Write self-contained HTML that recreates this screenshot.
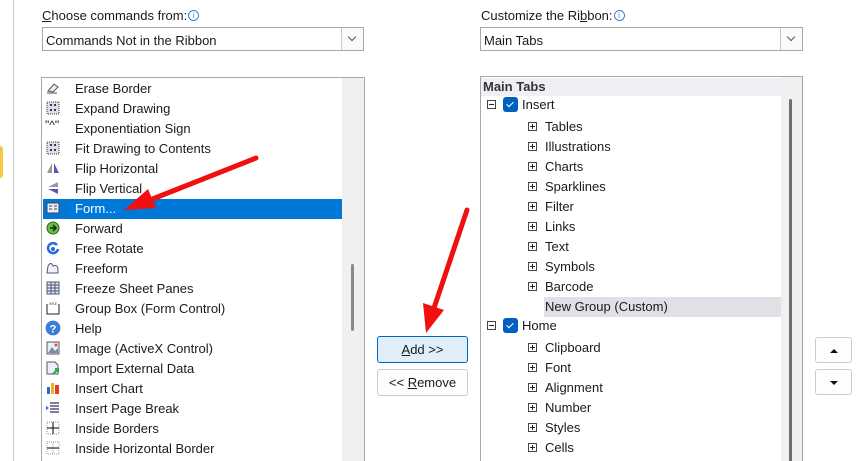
<!DOCTYPE html>
<html style="width:856px;height:461px;overflow:hidden"><head><meta charset="utf-8"><style>
*{box-sizing:border-box;margin:0;padding:0}
body{width:856px;height:461px;overflow:hidden;background:#fff;position:relative;font-family:"Liberation Sans",sans-serif;font-size:13px;color:#1a1a1a}
.a{position:absolute}
.lbl{top:8px;font-size:13px}
.info{display:inline-block;width:11px;height:11px;border:1px solid #3c7fd0;border-radius:50%;color:#3c7fd0;font-size:8px;line-height:9px;text-align:center;vertical-align:2px;margin-left:1px}
.dd{height:24px;border:1px solid #a8a8a8;background:#fff;padding:5px 0 0 3px}
.dd .btn{position:absolute;right:0;top:0;width:22px;height:22px;border-left:1px solid #c8c8c8;background:#fafafa}
.dd .btn:after{content:"";position:absolute;left:7px;top:6px;width:5px;height:5px;border-right:1px solid #555;border-bottom:1px solid #555;transform:rotate(45deg)}
.list{border:1px solid #a8a8a8;border-bottom:none;background:#fff;overflow:hidden}
.row{position:absolute;height:20px;line-height:22px;white-space:nowrap}
.ic{position:absolute;left:4px;top:3px;width:14px;height:14px}
.pm{position:absolute;width:9px;height:9px;border:1px solid #444;background:#fff}
.pm:before{content:"";position:absolute;left:1px;top:3px;width:5px;height:1px;background:#222}
.pm.p:after{content:"";position:absolute;left:3px;top:1px;width:1px;height:5px;background:#222}
.cb{position:absolute;width:15px;height:15px;background:#0060c0;border-radius:3px}
.cb:after{content:"";position:absolute;left:5px;top:3px;width:3px;height:6px;border-right:1.5px solid #fff;border-bottom:1.5px solid #fff;transform:rotate(45deg)}
.b{border:1px solid #ccc;border-radius:3px;background:#fdfdfd;text-align:center;line-height:26px}
</style></head><body>
<div class="a" style="left:13px;top:0;width:1px;height:461px;background:#c8c8c8"></div>
<div class="a" style="left:0;top:146px;width:3px;height:32px;background:#f5c842;border-radius:0 3px 3px 0"></div>

<div class="a lbl" style="left:42px"><u>C</u>hoose commands from:<span class="info">i</span></div>
<div class="a dd" style="left:42px;top:27px;width:322px">Commands Not in the Ribbon<div class="btn"></div></div>

<div class="a lbl" style="left:481px">Customize the Ri<u>b</u>bon:<span class="info">i</span></div>
<div class="a dd" style="left:480px;top:27px;width:323px">Main Tabs<div class="btn"></div></div>

<!-- left list -->
<div class="a list" style="left:41px;top:77px;width:324px;height:384px">
 <div class="a" style="left:300px;top:0;width:22px;height:384px;background:#f0f0f0"></div>
 <div class="a" style="left:309px;top:186px;width:3px;height:67px;background:#8a8a8a;border-radius:2px"></div>
 <div class="a" style="left:1px;top:121px;width:299px;height:20px;background:#0078d7"></div>
</div>
<div class="a" style="left:42px;top:78px;width:300px;height:383px;overflow:hidden">
 <div class="row" style="top:0"><svg class="ic" viewBox="0 0 14 14"><path d="M2 10 L8 3 L12 6 L7 11 Z" fill="#eee" stroke="#555"/><path d="M1 12 H11" stroke="#555"/></svg><span style="position:absolute;left:33px">Erase Border</span></div>
 <div class="row" style="top:20px"><svg class="ic" viewBox="0 0 14 14"><rect x="1" y="1" width="12" height="12" fill="#dde" stroke="#333" stroke-dasharray="1 1"/><path d="M4 4h2M8 4h2M4 9h2M8 9h2M5 3v2M9 3v2M5 8v2M9 8v2" stroke="#000"/></svg><span style="position:absolute;left:33px">Expand Drawing</span></div>
 <div class="row" style="top:40px"><span style="position:absolute;left:3px;font-size:12px;top:-4px">"^"</span><span style="position:absolute;left:33px">Exponentiation Sign</span></div>
 <div class="row" style="top:60px"><svg class="ic" viewBox="0 0 14 14"><rect x="1" y="1" width="12" height="12" fill="#dde" stroke="#333" stroke-dasharray="1 1"/><path d="M4 4h2M8 4h2M4 9h2M8 9h2M5 3v2M9 3v2M5 8v2M9 8v2" stroke="#000"/></svg><span style="position:absolute;left:33px">Fit Drawing to Contents</span></div>
 <div class="row" style="top:80px"><svg class="ic" viewBox="0 0 14 14"><path d="M6 2 L1 12 H6Z" fill="#999"/><path d="M8 2 L13 12 H8Z" fill="#6a4fb0"/></svg><span style="position:absolute;left:33px">Flip Horizontal</span></div>
 <div class="row" style="top:100px"><svg class="ic" viewBox="0 0 14 14"><path d="M12 1 L2 6 H12Z" fill="#999"/><path d="M12 13 L2 8 H12Z" fill="#6a4fb0"/></svg><span style="position:absolute;left:33px">Flip Vertical</span></div>
 <div class="row" style="top:120px;color:#fff"><svg class="ic" viewBox="0 0 14 14"><rect x="1" y="2" width="12" height="10" fill="#e8eef8" stroke="#445"/><path d="M3 5h3M3 8h3M8 5h3M8 8h3" stroke="#445"/></svg><span style="position:absolute;left:33px">Form...</span></div>
 <div class="row" style="top:140px"><svg class="ic" viewBox="0 0 14 14"><circle cx="7" cy="7" r="6" fill="#6bbf3a" stroke="#2d6a18"/><path d="M4 7h5M7 4l3 3-3 3" stroke="#123" fill="none" stroke-width="1.5"/></svg><span style="position:absolute;left:33px">Forward</span></div>
 <div class="row" style="top:160px"><svg class="ic" viewBox="0 0 14 14"><path d="M11 4 A5 5 0 1 0 12 8" stroke="#2a6ad0" stroke-width="2.5" fill="none"/><circle cx="7" cy="8" r="2" fill="#2a6ad0"/></svg><span style="position:absolute;left:33px">Free Rotate</span></div>
 <div class="row" style="top:180px"><svg class="ic" viewBox="0 0 14 14"><path d="M1 12 L2 5 Q5 0 7 5 Q12 3 12 9 V12Z" fill="#eef3fa" stroke="#557"/></svg><span style="position:absolute;left:33px">Freeform</span></div>
 <div class="row" style="top:200px"><svg class="ic" viewBox="0 0 14 14"><rect x="1" y="1" width="12" height="12" fill="#dde6f4" stroke="#557"/><path d="M1 4h12M1 7h12M1 10h12M5 1v12M9 1v12" stroke="#557"/></svg><span style="position:absolute;left:33px">Freeze Sheet Panes</span></div>
 <div class="row" style="top:220px"><svg class="ic" viewBox="0 0 14 14"><path d="M1 3v10h12V3" stroke="#222" fill="none"/><text x="3" y="4" font-size="4" font-family="Liberation Sans">XYZ</text></svg><span style="position:absolute;left:33px">Group Box (Form Control)</span></div>
 <div class="row" style="top:240px"><svg class="ic" viewBox="0 0 14 14" style="width:16px;height:16px;top:2px;left:3px"><circle cx="7" cy="7" r="6.5" fill="#3b7dd8"/><text x="7" y="11" font-size="10" font-weight="bold" fill="#fff" text-anchor="middle" font-family="Liberation Sans">?</text></svg><span style="position:absolute;left:33px">Help</span></div>
 <div class="row" style="top:260px"><svg class="ic" viewBox="0 0 14 14"><rect x="1" y="1" width="12" height="12" fill="#e8eef6" stroke="#556"/><path d="M2 12 L6 6 L9 10 L12 7 V12Z" fill="#7b8aa0"/><circle cx="10" cy="4" r="1.5" fill="#e05030"/></svg><span style="position:absolute;left:33px">Image (ActiveX Control)</span></div>
 <div class="row" style="top:280px"><svg class="ic" viewBox="0 0 14 14"><path d="M1 1h8l3 3v9H1Z" fill="#eef" stroke="#556"/><path d="M7 13 L12 8 M9 8h3v3" stroke="#3a3" stroke-width="2" fill="none"/></svg><span style="position:absolute;left:33px">Import External Data</span></div>
 <div class="row" style="top:300px"><svg class="ic" viewBox="0 0 14 14"><rect x="1" y="6" width="3" height="7" fill="#2a6ad0"/><rect x="5" y="2" width="3" height="11" fill="#f0b020"/><rect x="9" y="4" width="4" height="9" fill="#e04020"/></svg><span style="position:absolute;left:33px">Insert Chart</span></div>
 <div class="row" style="top:320px"><svg class="ic" viewBox="0 0 14 14"><path d="M4 2h9M4 5h9M4 8h9M4 11h9" stroke="#557" stroke-width="1.5"/><path d="M0 5 L3 7 L0 9Z" fill="#2a6ad0"/></svg><span style="position:absolute;left:33px">Insert Page Break</span></div>
 <div class="row" style="top:340px"><svg class="ic" viewBox="0 0 14 14"><rect x="1" y="1" width="12" height="12" fill="none" stroke="#999" stroke-dasharray="1 1"/><path d="M7 1v12M1 7h12" stroke="#000"/></svg><span style="position:absolute;left:33px">Inside Borders</span></div>
 <div class="row" style="top:360px"><svg class="ic" viewBox="0 0 14 14"><rect x="1" y="1" width="12" height="12" fill="none" stroke="#999" stroke-dasharray="1 1"/><path d="M7 1v12" stroke="#999" stroke-dasharray="1 1"/><path d="M1 7h12" stroke="#000"/></svg><span style="position:absolute;left:33px">Inside Horizontal Border</span></div>
</div>

<!-- buttons -->
<div class="a b" style="left:377px;top:336px;width:91px;height:27px;background:#e0eef9;border-color:#0067c0"><u>A</u>dd &gt;&gt;</div>
<div class="a b" style="left:377px;top:369px;width:91px;height:27px">&lt;&lt; <u>R</u>emove</div>
<div class="a b" style="left:815px;top:337px;width:37px;height:26px"><svg width="12" height="8" style="margin-top:9px;display:inline-block;vertical-align:top" viewBox="0 0 12 8"><path d="M2 6 L6 2 L10 6Z" fill="#111"/></svg></div>
<div class="a b" style="left:815px;top:369px;width:37px;height:26px"><svg width="12" height="8" style="margin-top:9px;display:inline-block;vertical-align:top" viewBox="0 0 12 8"><path d="M2 2 L6 6 L10 2Z" fill="#111"/></svg></div>

<!-- right list -->
<div class="a list" style="left:480px;top:76px;width:323px;height:385px">
 <div class="a" style="left:0;top:1px;width:300px;height:18px;background:#f0f0f4"></div>
 <div class="a" style="left:300px;top:0;width:22px;height:385px;background:#f0f0f0"></div>
 <div class="a" style="left:308px;top:22px;width:3px;height:370px;background:#6e6e6e;border-radius:2px"></div>
 <div class="a" style="left:63px;top:220px;width:237px;height:20px;background:#e0e0e6"></div>
</div>
<div class="a" style="left:480px;top:77px;width:300px;height:384px;overflow:hidden">
 <div class="row" style="top:0;left:3px;font-weight:bold;height:18px;line-height:20px;color:#333">Main Tabs</div>
 <div class="pm" style="left:7px;top:23px"></div><div class="cb" style="left:23px;top:20px"></div><div class="row" style="left:42px;top:17px">Insert</div>
 <div class="pm p" style="left:48px;top:45px"></div><div class="row" style="left:65px;top:39px">Tables</div>
 <div class="pm p" style="left:48px;top:65px"></div><div class="row" style="left:65px;top:59px">Illustrations</div>
 <div class="pm p" style="left:48px;top:85px"></div><div class="row" style="left:65px;top:79px">Charts</div>
 <div class="pm p" style="left:48px;top:105px"></div><div class="row" style="left:65px;top:99px">Sparklines</div>
 <div class="pm p" style="left:48px;top:125px"></div><div class="row" style="left:65px;top:119px">Filter</div>
 <div class="pm p" style="left:48px;top:145px"></div><div class="row" style="left:65px;top:139px">Links</div>
 <div class="pm p" style="left:48px;top:165px"></div><div class="row" style="left:65px;top:159px">Text</div>
 <div class="pm p" style="left:48px;top:185px"></div><div class="row" style="left:65px;top:179px">Symbols</div>
 <div class="pm p" style="left:48px;top:205px"></div><div class="row" style="left:65px;top:199px">Barcode</div>
 <div class="row" style="left:65px;top:219px">New Group (Custom)</div>
 <div class="pm" style="left:7px;top:244px"></div><div class="cb" style="left:23px;top:241px"></div><div class="row" style="left:42px;top:238px">Home</div>
 <div class="pm p" style="left:48px;top:266px"></div><div class="row" style="left:65px;top:260px">Clipboard</div>
 <div class="pm p" style="left:48px;top:286px"></div><div class="row" style="left:65px;top:280px">Font</div>
 <div class="pm p" style="left:48px;top:306px"></div><div class="row" style="left:65px;top:300px">Alignment</div>
 <div class="pm p" style="left:48px;top:326px"></div><div class="row" style="left:65px;top:320px">Number</div>
 <div class="pm p" style="left:48px;top:346px"></div><div class="row" style="left:65px;top:340px">Styles</div>
 <div class="pm p" style="left:48px;top:366px"></div><div class="row" style="left:65px;top:360px">Cells</div>
</div>

<!-- red arrows -->
<svg class="a" style="left:0;top:0" width="856" height="461">
 <path d="M256 158 L150 200" stroke="#f01010" stroke-width="5" stroke-linecap="round"/>
 <path d="M124 210 L148 189 L156 208Z" fill="#f01010"/>
 <path d="M467 210 L434 308" stroke="#f01010" stroke-width="5" stroke-linecap="round"/>
 <path d="M426 333 L423 303 L444 310Z" fill="#f01010"/>
</svg>
</body></html>
